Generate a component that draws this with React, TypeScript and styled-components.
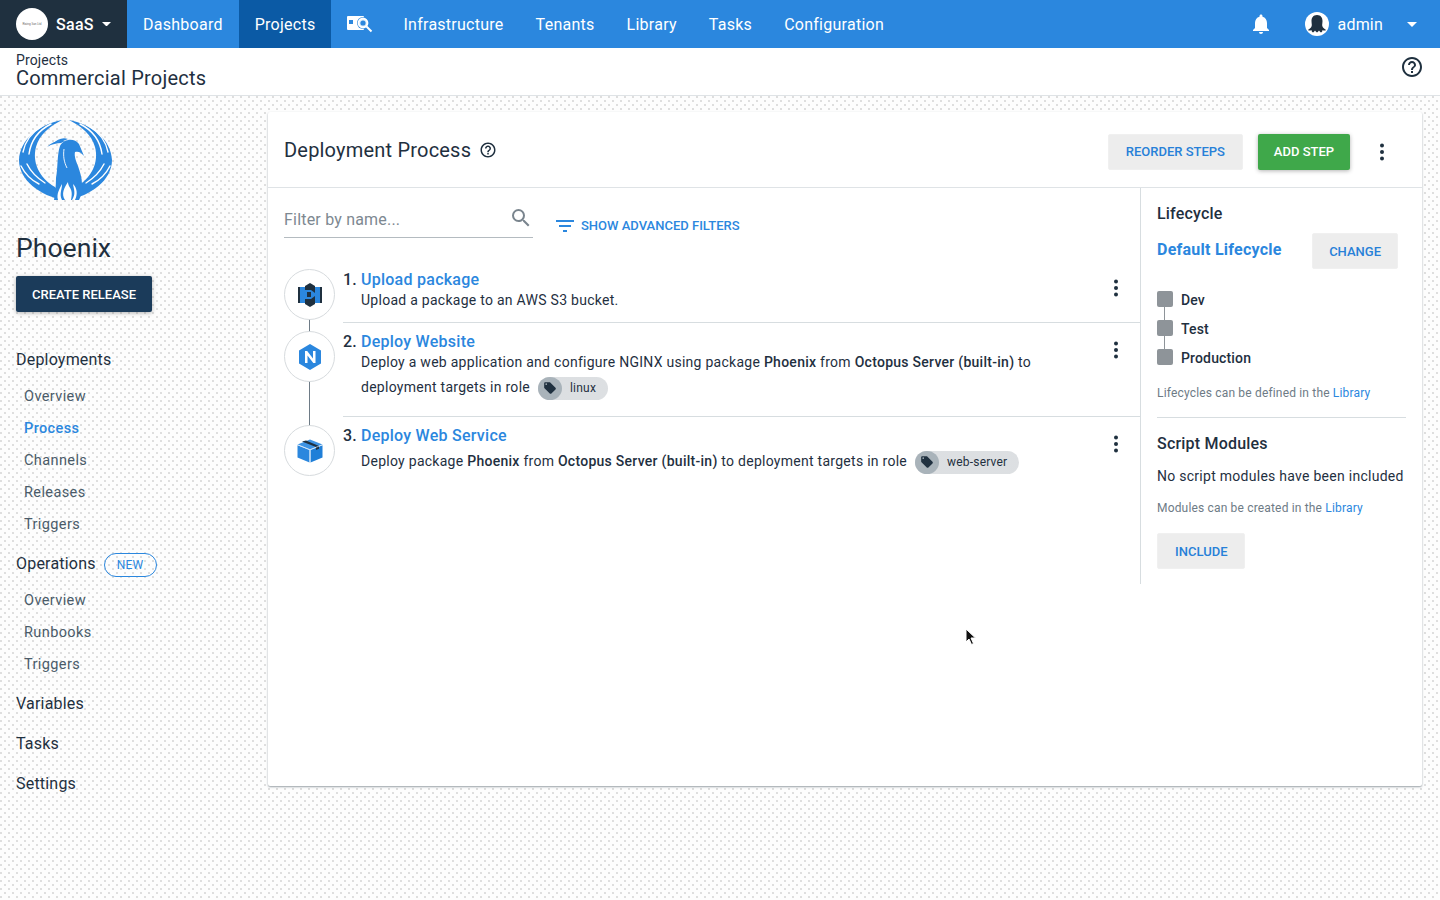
import React from "react";
import styled, { createGlobalStyle } from "styled-components";
import { MdLocalOffer, MdNotifications, MdOutlineHelpOutline, MdSearch } from "react-icons/md";

const GlobalStyle = createGlobalStyle`
  html, body {
    margin: 0;
    padding: 0;
  }
  body {
    font-family: Roboto, "Liberation Sans", sans-serif;
    color: #1f303f;
  }
  * {
    box-sizing: border-box;
  }
`;

const navItems = ["Infrastructure", "Tenants", "Library", "Tasks", "Configuration"];

const deployments = ["Overview", "Process", "Channels", "Releases", "Triggers"];
const operations = ["Overview", "Runbooks", "Triggers"];

const Kebab = () => (
  <KebabSvg viewBox="0 0 4 18" width="4" height="18">
    <circle cx="2" cy="2.5" r="2" />
    <circle cx="2" cy="9" r="2" />
    <circle cx="2" cy="15.5" r="2" />
  </KebabSvg>
);

const Caret = ({ width }: { width: number }) => (
  <svg width={width} height={width / 2} viewBox="0 0 12 6">
    <path d="M0 0h12L6 6z" fill="#fff" />
  </svg>
);

const wingPaths = (
  <>
    <path
      d="M44 2C20 7 2 22 1 42C1 62 22 78 46 82L37 69C21 60 14 44 18 29C21 17 32 8 44 2Z"
      fill="#2b87de"
    />
    <g fill="none" stroke="#fff" strokeWidth="1.400" strokeLinecap="round">
      <path d="M33 6C21 12 13 22 11 36" />
      <path d="M23 9C13 15 7 24 5 34" />
      <path d="M3 48C7 56 13 62 21 66" />
      <path d="M9 46C13 54 19 60 27 65" />
    </g>
  </>
);

const PhoenixLogo = () => (
  <svg width="96" height="84" viewBox="0 0 96 84">
    {wingPaths}
    <g transform="matrix(-1 0 0 1 95 0)">{wingPaths}</g>
    <path
      d="M42 28C46 20 57 20 61 26L66 38C63 34 60 33 57 34C56 38 58 43 60 48C62 54 64 60 64 66C65 72 63 78 61 82H36C37 76 38 68 38 60C40 50 39 36 42 28Z"
      fill="#2b87de"
    />
    <path d="M29 29C34 24 40 22 47 23L43 25C39 25 34 26 29 29Z" fill="#2b87de" />
    <path d="M35 26C39 21 45 19 50 21L45 23C42 23 38 24 35 26Z" fill="#2b87de" />
    <path d="M46 31C45 38 46 44 49 50" fill="none" stroke="#fff" strokeWidth="0.900" />
    <path d="M47 82C43 76 46 70 50 64C50 70 56 70 53 82Z" fill="#fff" />
    <path d="M40 82C38 76 42 70 44 66C44 72 41 76 44 82Z" fill="#fff" />
    <path d="M54 82C58 76 56 72 55 66C59 70 60 76 57 82Z" fill="#fff" />
  </svg>
);

const BucketIcon = () => (
  <svg width="24" height="26" viewBox="0 0 24 26">
    <rect x="0" y="5" width="2" height="16" fill="#1f303f" />
    <rect x="2" y="5" width="6" height="16" fill="#2b87de" />
    <rect x="16" y="5" width="6" height="16" fill="#2b87de" />
    <rect x="22" y="5" width="2" height="16" fill="#1f303f" />
    <path d="M12 1l5 3v18l-5 3-5-3V4z" fill="#1f303f" />
    <path d="M7 8h6l4 3v3l-4 3H7z" fill="#2b87de" />
    <rect x="9" y="10" width="4" height="5" fill="#1f303f" />
  </svg>
);

const NginxIcon = () => (
  <svg width="24" height="26" viewBox="0 0 24 26">
    <path d="M12 0l11 6.500v13L12 26 1 19.500v-13z" fill="#2b87de" />
    <path d="M7 19V7h2.200l5.800 7.500V7h2.500v12h-2.200L9.500 11.500V19z" fill="#fff" />
  </svg>
);

const PackageIcon = () => (
  <svg width="26" height="24" viewBox="0 0 26 24">
    <path d="M13 0.500l12.500 5-12.500 5L0.500 5.500z" fill="#3f94e4" />
    <path d="M0.500 6.200l12 4.800V23.500l-12-5z" fill="#2b87de" />
    <path d="M25.500 6.200l-12 4.800V23.500l12-5z" fill="#1f7fd8" />
    <path d="M5 2.500l14 5.500v3l3-1.200V7L9 1.500z" fill="#1f303f" />
    <path d="M13 11v12.500M0.500 5.700l12.500 5 12.500-5" fill="none" stroke="#d5e7f8" strokeWidth="0.700" />
  </svg>
);

const InsightsIcon = () => (
  <svg width="26" height="18" viewBox="0 0 26 18">
    <rect x="0" y="1" width="17" height="14" rx="1" fill="#fff" />
    <rect x="2" y="5" width="4" height="4" fill="#2b87de" />
    <circle cx="16" cy="8" r="6" fill="#2b87de" />
    <circle cx="16" cy="8" r="4.500" fill="#d9ebfa" stroke="#fff" strokeWidth="1.800" />
    <circle cx="16" cy="8" r="2.600" fill="#2b87de" />
    <path d="M19.500 11.500L24.500 16.500" stroke="#fff" strokeWidth="2" />
  </svg>
);

const App = () => {
  return (
    <>
      <GlobalStyle />
      <Page>
        <TopBar>
          <SpaceSwitcher>
            <SpaceLogo>
              <SpaceLogoText>Rising Sun Ltd</SpaceLogoText>
            </SpaceLogo>
            <SpaceName>SaaS</SpaceName>
            <Caret width={9} />
          </SpaceSwitcher>
          <NavItem>Dashboard</NavItem>
          <NavItem $active>Projects</NavItem>
          <NavIcon>
            <InsightsIcon />
          </NavIcon>
          {navItems.map((item) => (
            <NavItem key={item}>{item}</NavItem>
          ))}
          <TopBarRight>
            <MdNotifications size={24} color="#fff" />
            <UserMenu>
              <Avatar>
                <svg width="20" height="20" viewBox="0 0 20 20">
                  <path
                    d="M10 1C6 1 4.500 4 4.500 7c0 3 1 4.500-.5 6.500-1 1.300-2.500 2-3 2.500 1 1 2.500.5 3.500 0 0 1 .5 2 1.500 2.500 1-.5 1.500-1.500 2-2 .5.8 1 1.500 2 2 1-.5 1.500-1.500 2-2 .5.5 1 1.500 2 2 1-.5 1.500-1.500 1.500-2.500 1 .5 2.500 1 3.500 0-.5-.5-2-1.200-3-2.500-1.500-2-.5-3.500-.5-6.500 0-3-1.500-6-5.500-6z"
                    fill="#1f303f"
                  />
                </svg>
              </Avatar>
              <UserName>admin</UserName>
              <Caret width={10} />
            </UserMenu>
          </TopBarRight>
        </TopBar>

        <AreaTitle>
          <div>
            <Breadcrumb>Projects</Breadcrumb>
            <ProjectGroup>Commercial Projects</ProjectGroup>
          </div>
          <HelpWrap>
            <MdOutlineHelpOutline size={24} color="#1f303f" />
          </HelpWrap>
        </AreaTitle>

        <Body>
          <Sidebar>
            <PhoenixLogo />
            <ProjectName>Phoenix</ProjectName>
            <CreateRelease>CREATE RELEASE</CreateRelease>
            <NavGroups>
              <NavGroup>
                <NavHeading>Deployments</NavHeading>
                <SideLinks>
                  {deployments.map((item) => (
                    <SideLink key={item} $active={item === "Process"}>
                      {item}
                    </SideLink>
                  ))}
                </SideLinks>
              </NavGroup>
              <NavGroup>
                <NavHeading>
                  Operations <NewBadge>NEW</NewBadge>
                </NavHeading>
                <SideLinks>
                  {operations.map((item) => (
                    <SideLink key={item}>{item}</SideLink>
                  ))}
                </SideLinks>
              </NavGroup>
              <NavGroup>
                <NavHeading>Variables</NavHeading>
              </NavGroup>
              <NavGroup>
                <NavHeading>Tasks</NavHeading>
              </NavGroup>
              <NavGroup>
                <NavHeading>Settings</NavHeading>
              </NavGroup>
            </NavGroups>
          </Sidebar>

          <Card>
            <CardHeader>
              <CardTitle>
                Deployment Process
                <MdOutlineHelpOutline size={18} color="#1f303f" />
              </CardTitle>
              <HeaderActions>
                <GhostButton>REORDER STEPS</GhostButton>
                <AddStep>ADD STEP</AddStep>
                <HeaderKebab>
                  <Kebab />
                </HeaderKebab>
              </HeaderActions>
            </CardHeader>

            <CardBody>
              <StepsPane>
                <FilterRow>
                  <FilterInput>
                    <span>Filter by name...</span>
                    <MdSearch size={24} color="#7a858e" />
                  </FilterInput>
                  <AdvancedFilters>
                    <svg width="18" height="14" viewBox="0 0 18 14">
                      <path d="M0 1h18v2H0zM3 6h12v2H3zM7 11h4v2H7z" fill="#2b87de" />
                    </svg>
                    SHOW ADVANCED FILTERS
                  </AdvancedFilters>
                </FilterRow>

                <Step $connector>
                  <StepCircle>
                    <BucketIcon />
                  </StepCircle>
                  <StepContent>
                    <StepText>
                      <StepTitle>
                        <StepNumber>1.</StepNumber> <StepLink>Upload package</StepLink>
                      </StepTitle>
                      <StepDesc>Upload a package to an AWS S3 bucket.</StepDesc>
                    </StepText>
                    <Kebab />
                  </StepContent>
                </Step>

                <Step $connector>
                  <StepCircle>
                    <NginxIcon />
                  </StepCircle>
                  <StepContent $roomy>
                    <StepText>
                      <StepTitle>
                        <StepNumber>2.</StepNumber> <StepLink>Deploy Website</StepLink>
                      </StepTitle>
                      <StepDesc>
                        Deploy a web application and configure NGINX using package <b>Phoenix</b> from{" "}
                        <b>Octopus Server (built-in)</b> to
                        <br />
                        deployment targets in role
                        <RoleChip>
                          <ChipIcon>
                            <MdLocalOffer size={14} color="#1f303f" />
                          </ChipIcon>
                          linux
                        </RoleChip>
                      </StepDesc>
                    </StepText>
                    <Kebab />
                  </StepContent>
                </Step>

                <Step>
                  <StepCircle>
                    <PackageIcon />
                  </StepCircle>
                  <StepContent $last>
                    <StepText>
                      <StepTitle>
                        <StepNumber>3.</StepNumber> <StepLink>Deploy Web Service</StepLink>
                      </StepTitle>
                      <StepDesc $tall>
                        Deploy package <b>Phoenix</b> from <b>Octopus Server (built-in)</b> to deployment targets in
                        role
                        <RoleChip>
                          <ChipIcon>
                            <MdLocalOffer size={14} color="#1f303f" />
                          </ChipIcon>
                          web-server
                        </RoleChip>
                      </StepDesc>
                    </StepText>
                    <Kebab />
                  </StepContent>
                </Step>
              </StepsPane>

              <SidePane>
                <SideTitle>Lifecycle</SideTitle>
                <LifecycleRow>
                  <LifecycleName>Default Lifecycle</LifecycleName>
                  <GhostButton $tight>CHANGE</GhostButton>
                </LifecycleRow>
                <PhaseList>
                  {["Dev", "Test", "Production"].map((phase) => (
                    <Phase key={phase}>
                      <PhaseDot />
                      {phase}
                    </Phase>
                  ))}
                </PhaseList>
                <Note>
                  Lifecycles can be defined in the <NoteLink>Library</NoteLink>
                </Note>
                <Divider />
                <SideTitle>Script Modules</SideTitle>
                <EmptyText>No script modules have been included</EmptyText>
                <Note>
                  Modules can be created in the <NoteLink>Library</NoteLink>
                </Note>
                <IncludeRow>
                  <GhostButton>INCLUDE</GhostButton>
                </IncludeRow>
              </SidePane>
            </CardBody>
          </Card>
        </Body>

        <Cursor width="12" height="18" viewBox="0 0 12 18">
          <path d="M1 1v13l3-3 2.500 5.500 2-1L6 10h4.500z" fill="#111" stroke="#fff" strokeWidth="1" />
        </Cursor>
      </Page>
    </>
  );
};

export default App;

const Page = styled.div`
  position: relative;
  width: 1440px;
  height: 900px;
  overflow: hidden;
  background-color: #fdfdfd;
  background-image: radial-gradient(circle at 1px 1px, #dcdcdc 0.7px, transparent 0.8px),
    radial-gradient(circle at 1px 1px, #dcdcdc 0.7px, transparent 0.8px);
  background-size: 8px 8px;
  background-position: 0 0, 4px 4px;
`;

const TopBar = styled.header`
  display: flex;
  align-items: stretch;
  height: 48px;
  background: #2b87de;
  color: #fff;
`;

const SpaceSwitcher = styled.div`
  display: flex;
  align-items: center;
  width: 127px;
  padding-left: 16px;
  background: #1f303f;
`;

const SpaceLogo = styled.div`
  display: flex;
  align-items: center;
  justify-content: center;
  width: 32px;
  height: 32px;
  border-radius: 50%;
  background: #fff;
`;

const SpaceLogoText = styled.span`
  font-size: 3px;
  color: #666;
  white-space: nowrap;
`;

const SpaceName = styled.span`
  margin: 0 8px 0 8px;
  font-size: 16px;
  font-weight: 500;
  letter-spacing: 0.3px;
`;

const NavItem = styled.div<{ $active?: boolean }>`
  display: flex;
  align-items: center;
  padding: 0 16px;
  font-size: 16px;
  letter-spacing: 0.26px;
  background: ${(p) => (p.$active ? "#0b5aa5" : "transparent")};
`;

const NavIcon = styled.div`
  display: flex;
  align-items: center;
  padding: 0 14px 0 16px;
`;

const TopBarRight = styled.div`
  display: flex;
  align-items: center;
  margin-left: auto;
  padding-right: 23px;
  gap: 32px;
`;

const UserMenu = styled.div`
  display: flex;
  align-items: center;
`;

const Avatar = styled.div`
  display: flex;
  align-items: center;
  justify-content: center;
  width: 24px;
  height: 24px;
  border-radius: 50%;
  background: #fff;
`;

const UserName = styled.span`
  margin: 0 24px 0 9px;
  font-size: 16px;
  letter-spacing: 0.2px;
`;

const AreaTitle = styled.div`
  display: flex;
  align-items: center;
  justify-content: space-between;
  height: 48px;
  padding: 0 16px 4px;
  background: #fff;
  border-bottom: 1px solid #dfe3e6;
`;

const Breadcrumb = styled.div`
  font-size: 14px;
  line-height: 16px;
  letter-spacing: 0.1px;
`;

const ProjectGroup = styled.div`
  font-size: 20px;
  line-height: 20px;
  letter-spacing: 0.22px;
`;

const HelpWrap = styled.div`
  display: flex;
  margin-bottom: 6px;
`;

const Body = styled.div`
  display: flex;
  align-items: flex-start;
`;

const Sidebar = styled.aside`
  width: 268px;
  flex: none;
  padding: 22px 16px 0;
  > svg {
    display: block;
    margin-left: 2px;
  }
`;

const ProjectName = styled.h1`
  margin: 30px 0 12px;
  font-size: 26.6px;
  line-height: 32px;
  font-weight: 400;
`;

const CreateRelease = styled.button`
  display: block;
  width: 136px;
  height: 36px;
  padding: 0;
  border: 0;
  border-radius: 2px;
  background: #1b3b5a;
  color: #fff;
  font: 500 13px Roboto, sans-serif;
  box-shadow: 0 1px 4px rgba(0, 0, 0, 0.3);
`;

const NavGroups = styled.div`
  display: flex;
  flex-direction: column;
  gap: 12px;
  margin-top: 35px;
`;

const NavGroup = styled.nav``;

const NavHeading = styled.div`
  display: flex;
  align-items: center;
  gap: 8px;
  height: 24px;
  margin-bottom: 4px;
  font-size: 16px;
  letter-spacing: 0.2px;
`;

const NewBadge = styled.span`
  display: inline-flex;
  align-items: center;
  justify-content: center;
  width: 53px;
  height: 24px;
  margin-top: 4px;
  border: 1px solid #2b87de;
  border-radius: 12px;
  font-size: 12px;
  color: #2b87de;
`;

const SideLinks = styled.div`
  margin-top: 8px;
`;

const SideLink = styled.div<{ $active?: boolean }>`
  height: 32px;
  line-height: 36px;
  padding-left: 8px;
  font-size: 14.5px;
  letter-spacing: 0.4px;
  color: ${(p) => (p.$active ? "#2b87de" : "#4a5b69")};
  font-weight: ${(p) => (p.$active ? 500 : 400)};
`;

const Card = styled.main`
  width: 1154px;
  height: 674px;
  margin-top: 16px;
  background: #fff;
  border-radius: 2px;
  box-shadow: 0 1px 2px rgba(31, 48, 63, 0.45);
`;

const CardHeader = styled.div`
  display: flex;
  align-items: center;
  justify-content: space-between;
  height: 76px;
  padding: 0 16px;
  border-bottom: 1px solid #dfe3e6;
`;

const CardTitle = styled.h2`
  display: flex;
  align-items: center;
  gap: 8px;
  margin: 0;
  font-size: 20px;
  font-weight: 400;
  letter-spacing: 0.2px;
`;

const HeaderActions = styled.div`
  display: flex;
  align-items: center;
  gap: 15px;
  margin-top: 4px;
`;

const HeaderKebab = styled.div`
  display: flex;
  margin: 0 22px 0 15px;
`;

const GhostButton = styled.button<{ $tight?: boolean }>`
  height: 36px;
  padding: 0 ${(p) => (p.$tight ? "16px" : "17px")};
  border: 1px solid #f0f0f0;
  border-radius: 2px;
  background-color: #fdfdfd;
  background-image: radial-gradient(circle at 1px 1px, #ececec 0.7px, transparent 0.8px);
  background-size: 2px 2px;
  color: #2780d8;
  font: 500 13px Roboto, sans-serif;
`;

const AddStep = styled.button`
  width: 92px;
  height: 36px;
  padding: 0;
  border: 0;
  border-radius: 2px;
  background: #3fa84a;
  color: #fff;
  font: 500 13px Roboto, sans-serif;
  box-shadow: 0 1px 4px rgba(0, 0, 0, 0.3);
`;

const KebabSvg = styled.svg`
  flex: none;
  fill: #1f303f;
`;

const CardBody = styled.div`
  display: flex;
  align-items: flex-start;
`;

const StepsPane = styled.div`
  width: 872px;
  flex: none;
  padding-left: 16px;
`;

const FilterRow = styled.div`
  display: flex;
  align-items: flex-start;
  height: 73px;
`;

const FilterInput = styled.div`
  display: flex;
  align-items: center;
  justify-content: space-between;
  width: 249px;
  height: 37px;
  margin-top: 13px;
  border-bottom: 1px solid #b4bbc0;
  font-size: 16px;
  letter-spacing: 0.2px;
  color: #7d8891;
  svg {
    margin-top: -3px;
  }
`;

const AdvancedFilters = styled.div`
  display: flex;
  align-items: center;
  gap: 7px;
  margin: 30px 0 0 23px;
  font-size: 13px;
  font-weight: 500;
  color: #2b87de;
`;

const Step = styled.div<{ $connector?: boolean }>`
  position: relative;
  display: flex;
  align-items: stretch;
  ${(p) =>
    p.$connector &&
    `
    &::before {
      content: "";
      position: absolute;
      left: 25px;
      top: 50px;
      bottom: -10px;
      width: 1px;
      background: #6e7b86;
    }
  `}
`;

const StepCircle = styled.div`
  position: relative;
  z-index: 1;
  display: flex;
  align-items: center;
  justify-content: center;
  flex: none;
  width: 51px;
  height: 51px;
  margin-top: 8px;
  border-radius: 50%;
  border: 1px solid #d7dbde;
  background: #fff;
`;

const StepContent = styled.div<{ $last?: boolean; $roomy?: boolean }>`
  display: flex;
  justify-content: space-between;
  flex: 1;
  margin-left: 8px;
  padding: 9px 22px ${(p) => (p.$roomy ? "16px" : "9px")} 0;
  border-bottom: ${(p) => (p.$last ? "0" : "1px solid #d7dde0")};
  > svg {
    margin-top: 9px;
  }
`;

const StepText = styled.div``;

const StepTitle = styled.div`
  font-size: 16px;
  line-height: 20px;
  font-weight: 500;
`;

const StepNumber = styled.span`
  letter-spacing: 0.2px;
`;

const StepLink = styled.span`
  color: #2b87de;
  letter-spacing: 0.26px;
`;

const StepDesc = styled.div<{ $tall?: boolean }>`
  margin-top: ${(p) => (p.$tall ? "3px" : "-2px")};
  margin-left: 18px;
  font-size: 14px;
  line-height: 25px;
  letter-spacing: 0.27px;
  b {
    font-weight: 500;
  }
`;

const RoleChip = styled.span`
  display: inline-flex;
  align-items: center;
  vertical-align: middle;
  height: 23px;
  margin-left: 8px;
  padding-right: 12px;
  border-radius: 12px;
  background-color: #f8f8f8;
  background-image: radial-gradient(circle at 1px 1px, #dadde0 0.7px, transparent 0.8px);
  background-size: 2px 2px;
  font-size: 12px;
  letter-spacing: 0.2px;
`;

const ChipIcon = styled.span`
  display: flex;
  align-items: center;
  justify-content: center;
  width: 24px;
  height: 23px;
  margin-right: 8px;
  border-radius: 50%;
  background: #a9b3ba;
`;

const SidePane = styled.aside`
  flex: 1;
  height: 396px;
  padding: 15px 16px 0;
  border-left: 1px solid #d7dde0;
`;

const SideTitle = styled.div`
  font-size: 16px;
  line-height: 22px;
  font-weight: 500;
  letter-spacing: 0.2px;
`;

const LifecycleRow = styled.div`
  display: flex;
  align-items: flex-start;
  justify-content: space-between;
  margin-top: 8px;
  padding-right: 8px;
`;

const LifecycleName = styled.div`
  margin-top: 6px;
  font-size: 16px;
  line-height: 22px;
  font-weight: 700;
  letter-spacing: 0.25px;
  color: #2b87de;
`;

const PhaseList = styled.div`
  margin-top: 16px;
`;

const Phase = styled.div`
  display: flex;
  align-items: center;
  gap: 8px;
  height: 29px;
  font-size: 14px;
  font-weight: 500;
  letter-spacing: 0.15px;
  &:not(:last-child) > span::after {
    content: "";
    position: absolute;
    left: 7px;
    top: 16px;
    width: 1px;
    height: 13px;
    background: #8e9499;
  }
`;

const PhaseDot = styled.span`
  position: relative;
  width: 16px;
  height: 16px;
  border-radius: 2px;
  background: #8e9499;
  margin-top: -2px;
`;

const Note = styled.div`
  margin-top: 13px;
  font-size: 12px;
  line-height: 16px;
  letter-spacing: 0.17px;
  color: #6e7b86;
`;

const NoteLink = styled.span`
  color: #2b87de;
`;

const Divider = styled.div`
  height: 1px;
  margin: 16px 0 15px;
  background: #d7dde0;
`;

const EmptyText = styled.div`
  margin-top: 10px;
  font-size: 14px;
  line-height: 22px;
  letter-spacing: 0.27px;
`;

const IncludeRow = styled.div`
  margin-top: 17px;
`;

const Cursor = styled.svg`
  position: absolute;
  left: 965px;
  top: 628px;
`;
